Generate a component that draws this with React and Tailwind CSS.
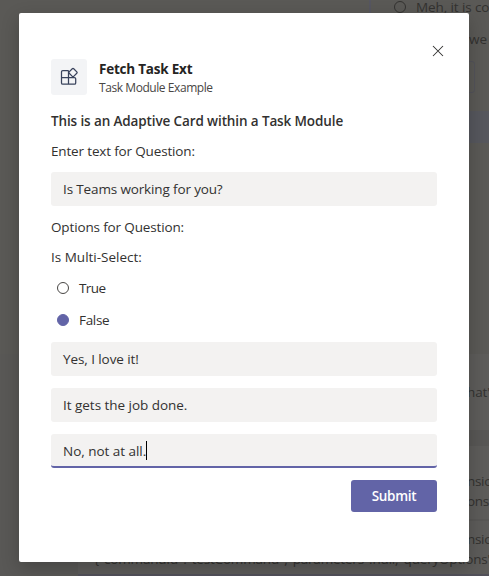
const labelText = "text-[13.5px] leading-5 whitespace-nowrap text-[#323130]";

function Field({ value, tracking, focused }) {
  return (
    <div
      className={
        "flex h-[34px] w-full items-center rounded-[3px] bg-[#f3f2f1] px-3 " +
        (focused ? "border-b-2 border-[#6264a7] pt-px" : "")
      }
    >
      <span className={labelText + " " + tracking}>{value}</span>
      {focused && <span className="h-[19px] w-px bg-black" />}
    </div>
  );
}

function Radio({ label, checked, tracking }) {
  return (
    <div className="flex h-8 items-center gap-[10px] pl-[6px]">
      <span
        className={
          "size-3 rounded-full border " +
          (checked ? "border-[#6264a7] bg-[#6264a7]" : "border-[#484644] bg-white")
        }
      />
      <span className={labelText + " " + tracking}>{label}</span>
    </div>
  );
}

function AppIcon() {
  return (
    <div className="flex size-9 shrink-0 items-center justify-center rounded-[3px] bg-[#f3f4f6]">
      <svg width="20" height="20" viewBox="0 0 20 20" fill="none" stroke="#39435c" strokeWidth="1.25">
        <path d="M9.5 3.5H3.8Q2.5 3.5 2.5 4.8V15.9Q2.5 17.2 3.8 17.2H15.4Q16.7 17.2 16.7 15.9V11.8Q16.7 10.5 15.4 10.5H2.5M9.5 3.5V17.2" />
        <path d="M13.3 1.8Q14 1.1 14.7 1.8L17.8 4.9Q18.5 5.6 17.8 6.3L14.7 9.4Q14 10.1 13.3 9.4L10.2 6.3Q9.5 5.6 10.2 4.9Z" fill="#f3f4f6" />
      </svg>
    </div>
  );
}

function Backdrop() {
  return (
    <div className="flex h-full flex-col bg-[#5a5956] text-[13.5px] leading-5 whitespace-nowrap text-[#333230]">
      <div className="flex h-[354px] justify-end">
        <div className="w-[120px] overflow-hidden border-l-2 border-[#565660]">
          <div className="flex h-[14px] items-center gap-[10px] pl-[23px]">
            <span className="size-3 shrink-0 rounded-full border border-[#333230]" />
            <span className="tracking-[-0.1px]">Meh, it is complicated</span>
          </div>
          <div className="mt-[15px] pl-[98px]">we</div>
          <div className="mt-[12px] h-8 w-[104px] rounded-[3px] border border-[#53535a]" />
          <div className="mt-[18px] h-8 bg-[#56575d]" />
        </div>
      </div>
      <div className="flex flex-1 bg-[#5d5c5a]">
        <div className="w-[78px] bg-[#595856]" />
        <div className="flex min-w-0 flex-1 flex-col overflow-hidden">
          <div className="h-[76px] pt-[28px] pl-[389px] tracking-[-0.1px]">hat's</div>
          <div className="h-4 bg-[#585755]" />
          <div className="h-[73px] pt-[25px] pl-[389px] tracking-[-0.3px]">
            <div>nsion</div>
            <div>ons"</div>
          </div>
          <div className="flex-1 border-t-2 border-[#585755] pt-[8px]">
            <div className="pl-[389px] tracking-[-0.3px]">nsion</div>
            <div className="pl-4 tracking-[-0.19px]">
              {'{"commandId":"testCommand","parameters":null,"queryOptions"'}
            </div>
          </div>
          <div className="h-0.5 bg-[#52515a]" />
        </div>
      </div>
    </div>
  );
}

export default function App() {
  return (
    <div className="relative h-[576px] w-[489px] overflow-hidden font-['Open_Sans','Noto_Sans',sans-serif]">
      <Backdrop />
      <div className="absolute top-[13px] left-[19px] flex h-[549px] w-[450px] flex-col rounded-[2px] bg-white px-8 shadow-[0_6px_18px_rgba(0,0,0,0.22)]">
        <div className="-mr-[7px] flex h-[46px] justify-end pt-[32px]">
          <svg width="12" height="12" viewBox="0 0 12 12" stroke="#323130" strokeWidth="1.05" fill="none">
            <path d="M1 1L11 11M11 1L1 11" />
          </svg>
        </div>
        <div className="flex h-9 items-center gap-3">
          <AppIcon />
          <div className="flex flex-col whitespace-nowrap">
            <span className="text-[13.5px] leading-5 font-bold tracking-[-0.22px] text-[#252423]">Fetch Task Ext</span>
            <span className="pt-px text-[12px] leading-4 tracking-[-0.43px] text-[#484644]">Task Module Example</span>
          </div>
        </div>
        <div className="mt-[16px] text-[13.5px] leading-5 font-semibold tracking-[-0.12px] whitespace-nowrap text-[#323130]">
          This is an Adaptive Card within a Task Module
        </div>
        <div className={labelText + " mt-[10px] tracking-[-0.16px]"}>Enter text for Question:</div>
        <div className="mt-[11px]">
          <Field value="Is Teams working for you?" tracking="tracking-[-0.14px]" />
        </div>
        <div className={labelText + " mt-[11px] tracking-[-0.14px]"}>Options for Question:</div>
        <div className={labelText + " mt-[10px] tracking-[0px]"}>Is Multi-Select:</div>
        <div className="mt-[5px]">
          <Radio label="True" tracking="tracking-[-0.6px]" />
          <Radio label="False" tracking="tracking-[-0.3px]" checked />
        </div>
        <div className="mt-[6px] flex flex-col gap-3">
          <Field value="Yes, I love it!" tracking="tracking-[-0.08px]" />
          <Field value="It gets the job done." tracking="tracking-[-0.03px]" />
          <Field value="No, not at all." tracking="tracking-[-0.03px]" focused />
        </div>
        <button className="mt-3 flex h-8 w-[86px] items-center justify-center self-end rounded-[3px] bg-[#6264a7] text-[13.5px] font-semibold tracking-[-0.3px] text-white">
          Submit
        </button>
      </div>
    </div>
  );
}
